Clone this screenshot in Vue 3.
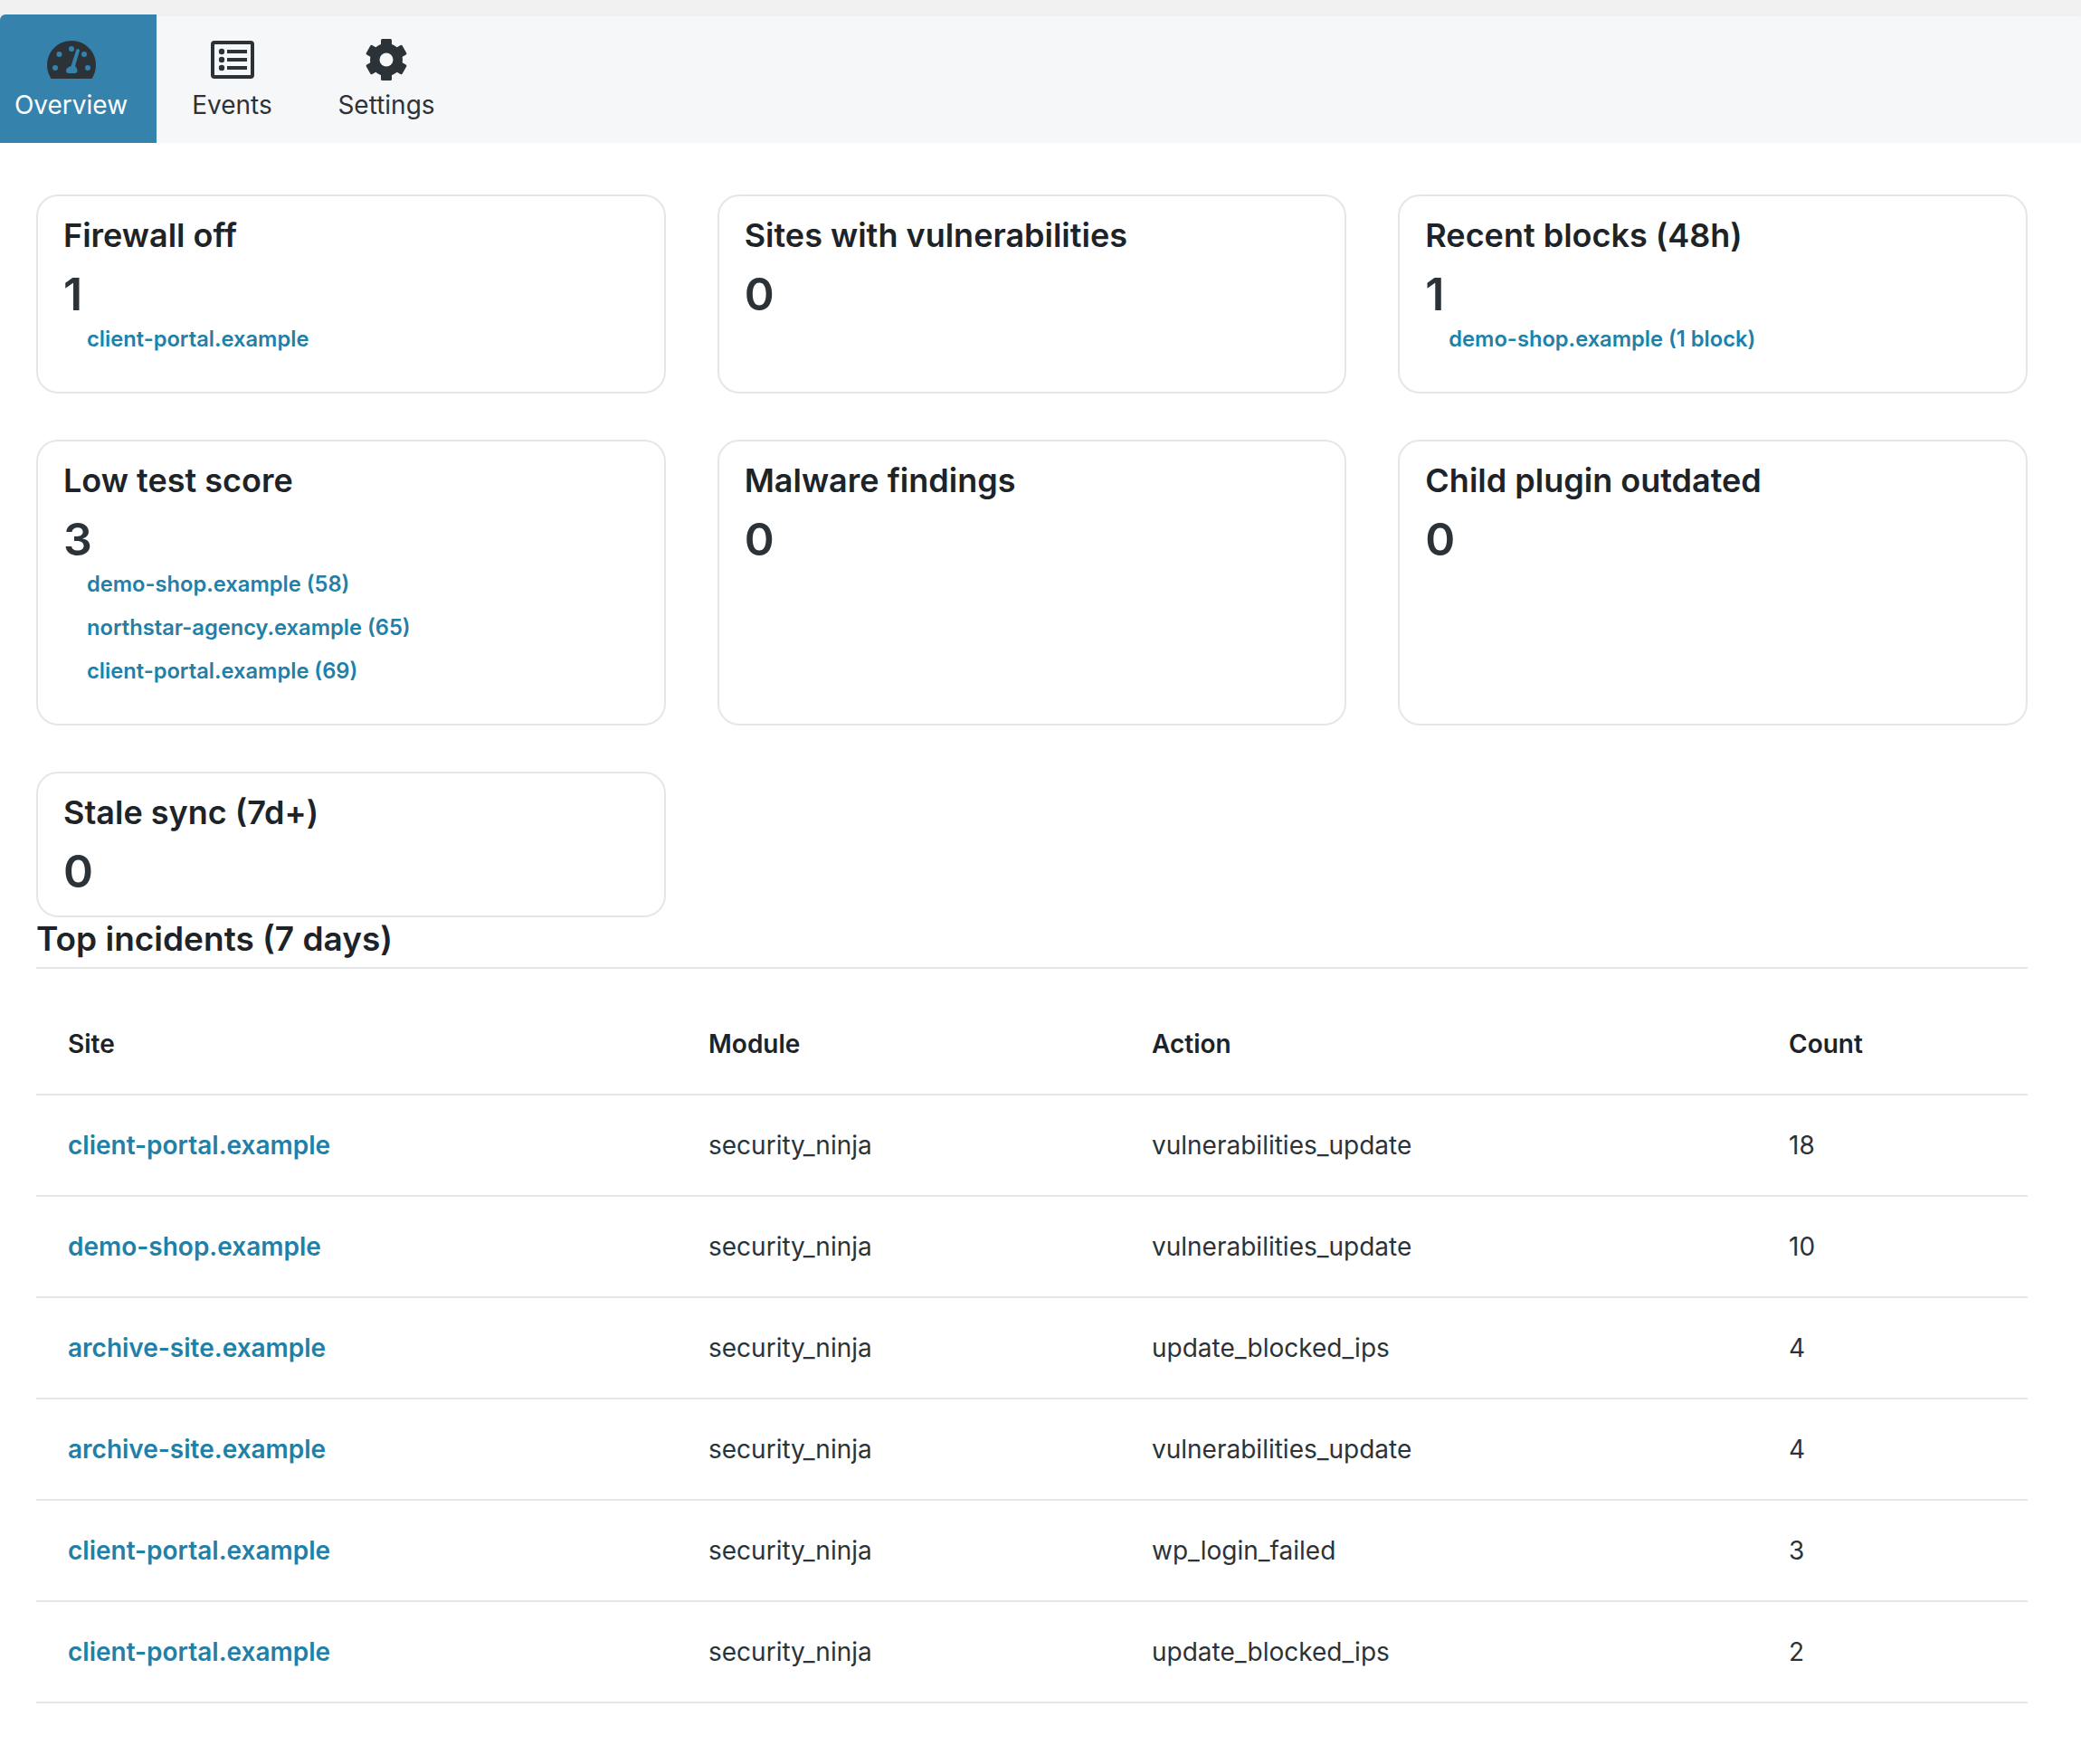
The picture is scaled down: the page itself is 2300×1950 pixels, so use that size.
<script setup>
const tabs = [
  { id: 'overview', label: 'Overview', active: true },
  { id: 'events', label: 'Events', active: false },
  { id: 'settings', label: 'Settings', active: false }
]

const cards = [
  { title: 'Firewall off', count: 1, links: ['client-portal.example'] },
  { title: 'Sites with vulnerabilities', count: 0, links: [] },
  { title: 'Recent blocks (48h)', count: 1, links: ['demo-shop.example (1 block)'] },
  { title: 'Low test score', count: 3, links: ['demo-shop.example (58)', 'northstar-agency.example (65)', 'client-portal.example (69)'] },
  { title: 'Malware findings', count: 0, links: [] },
  { title: 'Child plugin outdated', count: 0, links: [] },
  { title: 'Stale sync (7d+)', count: 0, links: [] }
]

const incidents = [
  { site: 'client-portal.example', module: 'security_ninja', action: 'vulnerabilities_update', count: 18 },
  { site: 'demo-shop.example', module: 'security_ninja', action: 'vulnerabilities_update', count: 10 },
  { site: 'archive-site.example', module: 'security_ninja', action: 'update_blocked_ips', count: 4 },
  { site: 'archive-site.example', module: 'security_ninja', action: 'vulnerabilities_update', count: 4 },
  { site: 'client-portal.example', module: 'security_ninja', action: 'wp_login_failed', count: 3 },
  { site: 'client-portal.example', module: 'security_ninja', action: 'update_blocked_ips', count: 2 }
]

const gearTeeth = [0, 60, 120, 180, 240, 300]
</script>

<template>
  <div class="page">
    <nav class="tabs">
      <a v-for="tab in tabs" :key="tab.id" class="tab" :class="[tab.id, { active: tab.active }]" href="#">
        <svg v-if="tab.id === 'overview'" class="icon" width="54" height="46" viewBox="0 -2 54 46">
          <path class="ink" d="M4.5 42C2 38 0 33 0 27C0 12 12 0 27 0S54 12 54 27C54 33 52 38 49.5 42Z" />
          <circle class="cut" cx="13.500" cy="15" r="3" />
          <circle class="cut" cx="27" cy="9" r="3" />
          <circle class="cut" cx="41" cy="15" r="3" />
          <circle class="cut" cx="9" cy="30" r="3" />
          <circle class="cut" cx="45" cy="30" r="3" />
          <path class="cut" d="M32.500 9.500Q35.500 8 36 11L31 28Q33.500 30 33.500 33Q33.500 36 30.500 36H24Q21 36 21 33Q21 30 26.500 28Z" />
        </svg>
        <svg v-else-if="tab.id === 'events'" class="icon" width="48" height="46" viewBox="0 -2 48 46">
          <path class="ink" fill-rule="evenodd" d="M4 0H44Q48 0 48 4V38Q48 42 44 42H4Q0 42 0 38V4Q0 0 4 0ZM4 4V38H44V4Z" />
          <circle class="ink" cx="12" cy="12" r="3.200" />
          <circle class="ink" cx="12" cy="21" r="3.200" />
          <circle class="ink" cx="12" cy="30" r="3.200" />
          <rect class="ink" x="18" y="10" width="22" height="4" />
          <rect class="ink" x="18" y="19" width="22" height="4" />
          <rect class="ink" x="18" y="28" width="22" height="4" />
        </svg>
        <svg v-else class="icon" width="46" height="46" viewBox="-23 -23 46 46">
          <circle class="ink" r="18" />
          <rect
            v-for="angle in gearTeeth"
            :key="angle"
            class="ink"
            x="-6"
            y="-23"
            width="12"
            height="10"
            rx="1.500"
            :transform="`rotate(${angle})`"
          />
          <circle class="hole" r="7.500" />
        </svg>
        <span>{{ tab.label }}</span>
      </a>
    </nav>

    <main class="content">
      <div class="cards">
        <section v-for="card in cards" :key="card.title" class="card">
          <h3>{{ card.title }}</h3>
          <div class="count">{{ card.count }}</div>
          <ul v-if="card.links.length">
            <li v-for="link in card.links" :key="link"><a href="#">{{ link }}</a></li>
          </ul>
        </section>
      </div>

      <h2>Top incidents (7 days)</h2>
      <table>
        <thead>
          <tr>
            <th class="col-site">Site</th>
            <th class="col-module">Module</th>
            <th class="col-action">Action</th>
            <th>Count</th>
          </tr>
        </thead>
        <tbody>
          <tr v-for="(row, index) in incidents" :key="index">
            <td><a href="#">{{ row.site }}</a></td>
            <td>{{ row.module }}</td>
            <td>{{ row.action }}</td>
            <td>{{ row.count }}</td>
          </tr>
        </tbody>
      </table>
    </main>
  </div>
</template>

<style>
body {
  background: #fff;
}
</style>

<style scoped>
.page {
  font-family: Inter, "Liberation Sans", sans-serif;
  color: #2c3338;
  padding-top: 16px;
  background: linear-gradient(#f0f0f1 16px, #fff 16px);
  min-height: 1950px;
  box-sizing: border-box;
}

.tabs {
  display: flex;
  height: 142px;
  background: #f6f7f9;
  box-shadow: inset 0 3px 3px -2px rgba(0, 0, 0, 0.05);
}

.tab {
  display: flex;
  flex-direction: column;
  align-items: center;
  justify-content: flex-start;
  padding-top: 27px;
  box-sizing: border-box;
  color: #2c3338;
  text-decoration: none;
  font-size: 28px;
}

.tab.overview {
  width: 173px;
  padding-right: 16px;
  background: #3582ad;
  color: #fff;
  border-top-left-radius: 6px;
}

.tab.events {
  width: 167px;
}

.tab.settings {
  width: 174px;
}

.icon {
  margin-bottom: 10px;
}

.ink {
  fill: #2c3338;
}

.cut {
  fill: #3582ad;
}

.hole {
  fill: #f6f7f9;
}

.content {
  padding: 57px 59px 0 40px;
}

.cards {
  display: grid;
  grid-template-columns: repeat(3, 1fr);
  column-gap: 57px;
  row-gap: 51px;
}

.card {
  border: 2px solid #e6e6e6;
  border-radius: 24px;
  padding: 22px 28px 27px;
  box-sizing: border-box;
}

h3 {
  margin: 0;
  font-size: 36px;
  font-weight: 600;
  line-height: 42px;
  color: #1d2327;
}

.count {
  font-size: 50px;
  font-weight: 600;
  line-height: 44px;
  margin-top: 22px;
}

ul {
  list-style: none;
  margin: 11px 0 0;
  padding: 0 0 0 26px;
}

li {
  font-size: 23.700px;
  font-weight: 600;
  line-height: 34px;
  margin-bottom: 14px;
}

li a {
  color: #2180a8;
  text-decoration: none;
}

h2 {
  margin: 0;
  font-size: 37px;
  font-weight: 600;
  line-height: 48px;
  color: #1d2327;
  padding-bottom: 7px;
  border-bottom: 2px solid #e6e6e6;
}

table {
  width: 100%;
  border-collapse: collapse;
  font-size: 28px;
  table-layout: fixed;
  margin-top: 28px;
}

th {
  text-align: left;
  font-weight: 600;
  color: #1d2327;
  height: 110px;
  padding: 0 0 0 35px;
  border-bottom: 2px solid #e6e6e6;
}

td {
  height: 110px;
  padding: 0 0 0 35px;
  border-bottom: 2px solid #e6e6e6;
}

.col-site { width: 673px; }
.col-module { width: 455px; }
.col-action { width: 669px; }

td a {
  color: #2180a8;
  font-weight: 600;
  text-decoration: none;
}
</style>
